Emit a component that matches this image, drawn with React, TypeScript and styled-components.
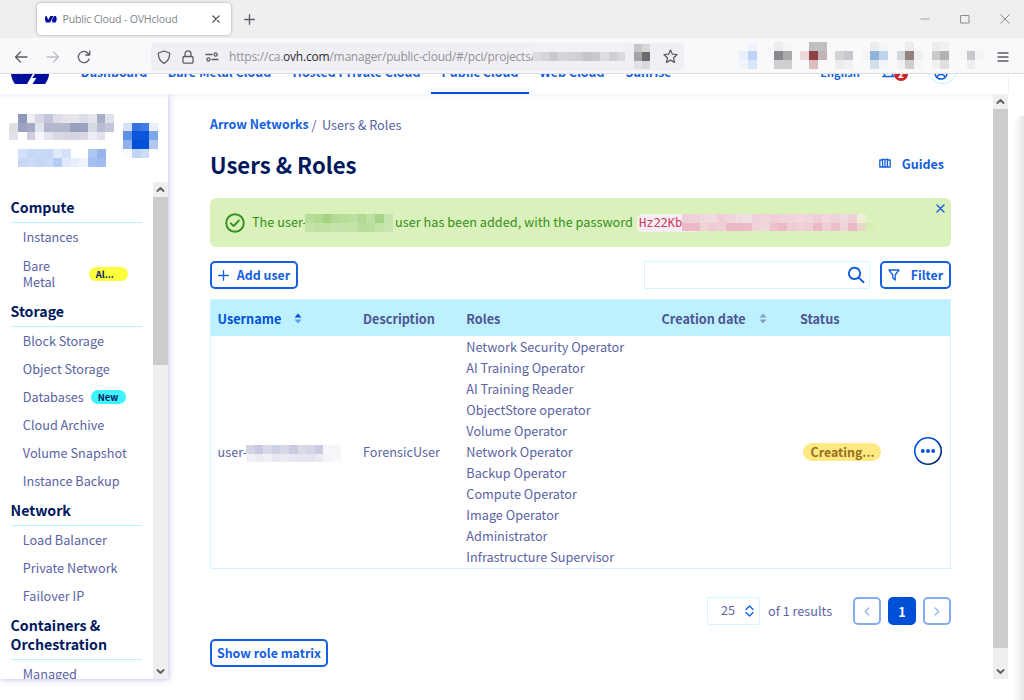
import React from "react";
import styled, { createGlobalStyle } from "styled-components";

const GlobalStyle = createGlobalStyle`
  *, *::before, *::after { box-sizing: border-box; }
  html, body { margin: 0; padding: 0; background: #fff; overflow: hidden; }
  svg { display: block; flex: none; }
`;

const ovhFont = `"Noto Sans CJK SC", "Open Sans", sans-serif`;
const systemFont = `"Open Sans", "Noto Sans", sans-serif`;
const blue = "#1460e0";
const navy = "#00185e";
const slate = "#5a63a3";

/* ---------- pixelated redaction ---------- */

const MosaicGrid = styled.div<{ $cols: number; $cell: number }>`
  display: grid;
  flex: none;
  grid-template-columns: repeat(${(p) => p.$cols}, ${(p) => p.$cell}px);
  grid-auto-rows: ${(p) => p.$cell}px;
`;

const Mosaic = ({ rows, cell = 8.75, className }: { rows: string[]; cell?: number; className?: string }) => {
  const cells = rows.map((r) => r.split(" "));
  return (
    <MosaicGrid $cols={cells[0].length} $cell={cell} className={className}>
      {cells.flatMap((row, y) =>
        row.map((c, x) => <span key={`${y}-${x}`} style={{ background: c === "-" ? "transparent" : `#${c}` }} />)
      )}
    </MosaicGrid>
  );
};

const toolbarPixels = [
  "- f0f3fb - - ededf0 f5f5f7 - - c0c0c2 c0c0c2 - - - - - ececee f4f5f7 - - ececee - - ececec f2f2f2 - - - -",
  "eaf0fb bfd3f7 - - 8a898d a9a9ab - ecd8da 8f4145 c4b5b5 - d3d3d5 c8c7cb - f4f4f7 90b3d8 bfd4ec - d3d8dc 94807c eeeeef - cacaca b2b2b4 - f6f6f7 c9c8cd f4f4f6",
  "f0f4fb d9e6f9 - - cfcfd1 cfcfd1 - - dcbcbe - - ececef f1f1f3 - - cfdfec f2f5fa - f0f0f2 cfcfcf f6f6f8 - f1f1f3 dfdfe1 - - eeeef1 -",
];
const urlPixels = [
  "f1f0f5 f2f1f6 f1f0f5 f2f1f6 f1f0f5 f1f0f5 f2f1f6 f1f0f5 f2f1f6 f1f0f5 f2f1f6 f0eff4 c8c7ca d8d7da",
  "dcdbdf d5d4d8 c9c8cc d5d4d8 d2d1d5 cfced2 c6c5c9 c8c7cb dedde1 cfced2 dad9dd f0eff4 a5a4a7 6b6a6d",
  "f0eff4 f0eff4 f0eff4 f0eff4 f0eff4 f0eff4 f0eff4 f0eff4 f0eff4 f0eff4 f0eff4 f0eff4 e3e2e6 d9d8dc",
];
const accountPixels = [
  "- 8e97b8 eeeff2 d6d7e3 c4c6d8 dcdde6 e3e4ec e5e6ec dddfe8 e3e4ec a8adc8 dfe1ea",
  "dedfe3 9ba3bf a3aac4 dfe4ee b2b6cf b4b8cf b4b8cf 9aa0bb 9da3be d5d9e4 b9bcd2 c3c6d6",
  "e2e2ec - cfcfde f4f6fa e4e4ee d8d9e5 d5d6e2 d5d6e3 d7d8e4 ecedf2 e2e2ec fdfdfe",
];
const accountLinkPixels = [
  "d2e0f8 c6d8f5 c9daf6 c6d8f5 dfe9fa d5e1f8 - - afc6f1 96b5ef",
  "c6d8f5 cbdaf5 c5d7f5 c9daf6 b4cdf4 e0e9fb e6edfb f1f4fb a5bff0 a0bcef",
];
const avatarPixels = [
  "d5e2f9 3273df 3f7ce3 e9effb",
  "5e91e6 0b56da 0b56da 7fa7ec",
  "8fb2ee 0250d7 0250d7 b0c7f2",
  "fafbfd c0d4f5 cdddf7 -",
];
const greenPixels = [
  "b9dd9b b1da90 a4d282 b4db96 b6dc99 bbdfa0 b0d892 bfe0a4 a6d488 c5e4ad",
  "c3e3a9 bfe1a4 bfe1a4 c5e4ac c3e3a9 c3e3a9 b9de9c b9de9c c3e3a9 c8e6b0",
];
const pinkPixels = [
  "efd0d6 efd2d9 f0d8dc f0dadd eecfd7 f0d5da f0dcdf f1e2e2 efd2d9 efd4da efced6 efd4da f0d6dc f0d8dc efd6db efcfd7 f0d8dc efd3da f0dade efd0d6 eef0d5 -",
  "ebb8c5 ecbac7 efd6d4 efc9d4 efcfd8 ebb8c5 ebb8c5 ecbdc9 efd2da f0d8da edc2cd ebb8c5 efccd5 efd0d8 efcdd6 ebb8c5 efced7 ecc0cb efd3da ebb8c5 e9d8c9 d5efb4",
];
const userPixels = [
  "d5d6e5 c6c8de d9dae8 cdcfe2 d6d8e7 c8cae0 d9dbe8 d5d6e6 c9cbe0 f6f6fa f6f6fa",
  "f0f0f6 ebebf3 f0f0f6 e8e8f2 ebebf4 e6e7f2 e5e6f2 e5e5f0 ebebf3 f6f6fa f9f9fc",
];

/* ---------- browser chrome ---------- */

const Window = styled.div`
  display: flex;
  flex-direction: column;
  width: 1024px;
  height: 700px;
  overflow: hidden;
  background: #fff;
  font-family: ${ovhFont};
  font-size: 12.7px;
  color: ${slate};
`;

const TabBar = styled.div`
  display: flex;
  align-items: center;
  height: 38px;
  flex: none;
  padding: 0 14px 0 37px;
  background: #efefef;
`;

const BrowserTab = styled.div`
  display: flex;
  align-items: center;
  width: 194px;
  height: 32px;
  padding: 0 9px 0 8px;
  border-radius: 4px;
  background: #fff;
  box-shadow: 0 0 3px rgba(0, 0, 0, 0.35);
`;

const TabTitle = styled.span`
  flex: 1;
  margin-left: 5.5px;
  font: 10.6px/16px ${systemFont};
  letter-spacing: -0.2px;
  color: #85858b;
  white-space: nowrap;
`;

const NewTab = styled.span`
  flex: 1;
  margin-left: 13px;
`;

const WindowButtons = styled.div`
  display: flex;
  align-items: center;
  gap: 30px;
`;

const AddressBar = styled.div`
  display: flex;
  align-items: center;
  flex: none;
  height: 36px;
  padding: 2px 15px 0 14px;
  background: #f9f9fb;
  border-bottom: 1px solid #dddde2;
`;

const HistoryButtons = styled.div`
  display: flex;
  align-items: center;
  gap: 17.5px;
  width: 137px;
`;

const UrlField = styled.div`
  display: flex;
  align-items: center;
  width: 533px;
  height: 28px;
  padding: 0 6px 0 6px;
  border-radius: 4px;
  background: #f0eff4;
`;

const UrlIcons = styled.div`
  display: flex;
  align-items: center;
  gap: 10px;
  width: 73px;
`;

const Url = styled.span`
  width: 304px;
  font: 12px/18px ${systemFont};
  letter-spacing: -0.22px;
  color: #929298;
  white-space: nowrap;
  b { font-weight: 400; color: #2a2a33; }
`;

const UrlMosaic = styled(Mosaic)`
  width: 118px;
  margin-right: 12px;
`;

const Extensions = styled(Mosaic)`
  margin: -2px auto 0 55px;
`;

/* ---------- site header ---------- */

const SiteHeader = styled.header`
  position: relative;
  z-index: 2;
  flex: none;
  width: 1009px;
  height: 20px;
  overflow: hidden;
  background: #fff;
  border-right: 1px solid #eef0fa;
`;

const HeaderInner = styled.div`
  display: flex;
  height: 47px;
  margin-top: -27px;
  padding-left: 11px;
`;

const HeaderLogo = styled.div`
  align-self: flex-end;
  width: 60px;
  height: 34px;
`;

const NavItem = styled.a<{ $width: number; $active?: boolean; $small?: boolean }>`
  width: ${(p) => p.$width}px;
  flex: none;
  padding-top: 15px;
  text-align: center;
  line-height: 20px;
  font-size: ${(p) => (p.$small ? 10.9 : 12.4)}px;
  font-weight: 700;
  color: ${blue};
  white-space: nowrap;
  box-shadow: ${(p) => (p.$active ? "inset 0 -2px 0 #0050d7" : "none")};
`;

const HeaderTools = styled.div`
  display: flex;
  flex: 1;
  padding-left: 128px;
`;

const Bell = styled.div`
  display: flex;
  margin: 17px 0 0 12px;
  width: 45px;
`;

const BellCount = styled.span`
  width: 14px;
  height: 14px;
  margin: 3px 0 0 -1px;
  border-radius: 50%;
  background: #c7252b;
  color: #fff;
  font-size: 10px;
  font-weight: 700;
  line-height: 14px;
  text-align: center;
`;

const UserCircle = styled.div`
  display: flex;
  justify-content: center;
  width: 31px;
  height: 31px;
  margin-top: 6px;
  padding: 12px 3px 0 0;
  border: 1px solid #bef1ff;
  border-radius: 50%;
`;

/* ---------- page frame ---------- */

const Page = styled.div`
  display: flex;
  flex: 1;
  min-height: 0;
  padding-bottom: 21px;
`;

const Sidebar = styled.aside`
  display: flex;
  flex-direction: column;
  flex: none;
  width: 168px;
  height: 585px;
  box-shadow: 0 0 6px rgba(100, 100, 210, 0.5), inset 0 5px 4px -3px #eef0fb;
`;

const Account = styled.div`
  display: flex;
  flex: none;
  height: 88px;
  padding: 20px 0 0 9px;
`;

const AccountText = styled.div`
  width: 114px;
`;

const AccountLink = styled(Mosaic)`
  margin: 9px 0 0 9px;
`;

const Avatar = styled(Mosaic)`
  margin-top: 8.5px;
`;

const SidebarScroll = styled.div`
  display: flex;
  flex: 1;
  min-height: 0;
`;

const Menu = styled.nav`
  flex: 1;
  padding: 10px 11px 0 10.5px;
  overflow: hidden;
`;

const MenuHeading = styled.h2`
  margin: 6px 0 0;
  padding-bottom: 5px;
  border-bottom: 1px solid #bef1ff;
  font-size: 14.2px;
  font-weight: 700;
  line-height: 19px;
  color: ${navy};
`;

const MenuItem = styled.a<{ $tall?: boolean }>`
  display: flex;
  align-items: center;
  height: ${(p) => (p.$tall ? 45 : 28)}px;
  padding-left: 12.3px;
  line-height: 16px;
  color: ${slate};
  white-space: nowrap;
`;

const MenuLabel = styled.span<{ $width?: number }>`
  width: ${(p) => (p.$width ? `${p.$width}px` : "auto")};
  white-space: ${(p) => (p.$width ? "normal" : "nowrap")};
`;

const Badge = styled.span<{ $color: string; $width: number; $gap: number }>`
  width: ${(p) => p.$width}px;
  height: 14px;
  margin-left: ${(p) => p.$gap}px;
  padding-left: 7px;
  border-radius: 7px;
  background: ${(p) => p.$color};
  font-size: 9.4px;
  font-weight: 700;
  line-height: 14px;
  color: ${navy};
`;

const Scrollbar = styled.div`
  display: flex;
  flex-direction: column;
  align-items: center;
  flex: none;
  width: 15px;
  background: #efefef;
`;

const ScrollArrow = styled.div`
  display: grid;
  place-items: center;
  width: 15px;
  height: 15px;
`;

const Thumb = styled.div<{ $height: number }>`
  width: 15px;
  height: ${(p) => p.$height}px;
  margin-bottom: auto;
  background: #cccccc;
`;

const Content = styled.main`
  display: flex;
  flex-direction: column;
  width: 825px;
  padding: 20px 42px 0 42px;
  box-shadow: inset 0 4px 4px -3px #e8ebf8;
`;

const WindowEdge = styled.div`
  width: 10px;
  margin: 22px 0 -21px auto;
  background: linear-gradient(to right, #fff, #e6e6ea);
  border-radius: 8px 0 0 0;
`;

/* ---------- content ---------- */

const Breadcrumb = styled.div`
  display: flex;
  height: 21px;
  line-height: 21px;
  white-space: nowrap;
`;

const BreadcrumbLink = styled.a`
  width: 101.5px;
  font-weight: 700;
  font-size: 12.4px;
  color: ${blue};
`;

const Crumb = styled.span`
  margin-left: 5.5px;
`;

const TitleRow = styled.div`
  display: flex;
  justify-content: space-between;
  align-items: center;
  height: 34px;
  margin-top: 12px;
  padding-right: 7px;
`;

const Title = styled.h1`
  margin: 0;
  font-size: 22.15px;
  line-height: 34px;
  font-weight: 700;
  color: ${navy};
`;

const Guides = styled.a`
  display: flex;
  align-items: center;
  gap: 11px;
  padding-bottom: 2px;
  font-size: 12.5px;
  font-weight: 700;
  color: ${blue};
`;

const Alert = styled.div`
  display: flex;
  align-items: center;
  height: 49px;
  margin-top: 17px;
  padding-left: 14.5px;
  border-radius: 6px;
  background: #dbf1bb;
  color: #33901a;
  line-height: 20px;
  white-space: nowrap;
`;

const AlertText = styled.span<{ $width: number; $left?: number }>`
  width: ${(p) => p.$width}px;
  margin-left: ${(p) => p.$left ?? 0}px;
  padding-bottom: 1px;
  letter-spacing: 0.02px;
`;

const AlertUser = styled(Mosaic)`
  margin-top: 1px;
`;

const Password = styled.code`
  display: flex;
  align-items: center;
  width: 237px;
  height: 18px;
  padding-left: 2px;
  border-radius: 5px 0 0 5px;
  font: 12.2px/18px "DejaVu Sans Mono", monospace;
  letter-spacing: -0.15px;
  color: #cf3a62;
  background: linear-gradient(to right, #f5eff2 60px, transparent 60px);
`;

const PasswordText = styled.span`
  width: 43px;
`;

const CloseButton = styled.div`
  align-self: flex-start;
  margin: 6px 6px 0 auto;
`;

const Toolbar = styled.div`
  display: flex;
  height: 28px;
  margin-top: 14px;
`;

const Button = styled.button<{ $width: number }>`
  display: flex;
  align-items: center;
  justify-content: center;
  gap: 8px;
  width: ${(p) => p.$width}px;
  height: 28px;
  padding: 0;
  border: 2px solid ${blue};
  border-radius: 5px;
  background: #fff;
  font: 700 12.4px/20px ${ovhFont};
  color: ${blue};
  white-space: nowrap;
`;

const SearchBox = styled.div`
  display: flex;
  align-items: center;
  justify-content: flex-end;
  width: 226px;
  height: 28px;
  margin: 0 10px 0 auto;
  padding-right: 4px;
  border: 1px solid #d3f6ff;
`;

const Table = styled.div`
  margin-top: 10px;
  border: 1px solid #d0f5ff;
`;

const Row = styled.div`
  display: grid;
  grid-template-columns: 145.5px 103.3px 195.2px 138.5px 114px 1fr;
  align-items: center;
  padding-left: 6.5px;
`;

const HeadRow = styled(Row)`
  height: 36px;
  background: #bef1ff;
  font-weight: 700;
`;

const BodyRow = styled(Row)`
  height: 232px;
  padding-bottom: 1px;
`;

const HeadCell = styled.div<{ $active?: boolean }>`
  display: flex;
  align-items: center;
  gap: 13px;
  color: ${(p) => (p.$active ? "#0050d7" : "#4d5592")};
`;

const UserCell = styled.div`
  display: flex;
  align-items: center;
`;

const UserPrefix = styled.span`
  width: 28.5px;
`;

const UserMosaic = styled(Mosaic)`
  margin-top: 4px;
`;

const RoleLine = styled.div`
  line-height: 21px;
  white-space: nowrap;
`;

const Status = styled.span`
  width: 78px;
  height: 18px;
  margin-left: 3.5px;
  border-radius: 9px;
  background: #ffe982;
  font-size: 12.4px;
  font-weight: 700;
  line-height: 18px;
  text-align: center;
  color: #96701f;
`;

const RowMenu = styled.div`
  padding-bottom: 1px;
`;

const Pagination = styled.div`
  display: flex;
  align-items: center;
  justify-content: flex-end;
  gap: 7px;
  height: 28px;
  margin-top: 28px;
`;

const PageSize = styled.div`
  display: flex;
  justify-content: space-between;
  align-items: center;
  width: 53px;
  height: 28px;
  padding: 0 5px 0 13px;
  border: 1px solid #d3f6ff;
  border-radius: 2px;
`;

const PageSizeValue = styled.span`
  padding-bottom: 3px;
`;

const Results = styled.span`
  width: 71px;
  margin: 0 7px 0 1px;
  padding-bottom: 1px;
  white-space: nowrap;
`;

const PageButton = styled.div<{ $current?: boolean }>`
  display: grid;
  place-items: center;
  width: 28px;
  height: 28px;
  border: 2px solid ${(p) => (p.$current ? "#0050d7" : "#85abf0")};
  border-radius: 5px;
  background: ${(p) => (p.$current ? "#0050d7" : "#fff")};
  color: #fff;
  font-weight: 700;
`;

const Footer = styled.div`
  margin-top: 14px;
`;

/* ---------- icons ---------- */

const Stroke = ({ w, h = w, d, color = "#5b5b66", sw = 1.3 }: { w: number; h?: number; d: string; color?: string; sw?: number }) => (
  <svg width={w} height={h} viewBox={`0 0 ${w} ${h}`} fill="none" stroke={color} strokeWidth={sw} strokeLinecap="round" strokeLinejoin="round">
    <path d={d} />
  </svg>
);

const OvhMark = ({ width, height }: { width: number; height: number }) => (
  <svg width={width} height={height} viewBox="0 0 40 24" fill="#000e9c">
    <path d="M2 2C-1 8 -1 18 4 24H16.5L29 2H18L11 14.5L5 2Z" />
    <path d="M27 9L31 2H36C41 10 39.5 18 35 24H22L26 18H22Z" />
  </svg>
);

const SortIcon = ({ up, down }: { up: string; down: string }) => (
  <svg width="8" height="11" viewBox="0 0 8 11">
    <path d="M0.5 4.5L4 0.5L7.5 4.5Z" fill={up} />
    <path d="M0.5 6.5L4 10.5L7.5 6.5Z" fill={down} />
  </svg>
);

const MoreIcon = () => (
  <svg width="28" height="28" viewBox="0 0 28 28">
    <defs>
      <linearGradient id="ring" x1="0" y1="0" x2="1" y2="1">
        <stop offset="0.3" stopColor="#0050d7" />
        <stop offset="0.8" stopColor="#002d7a" />
      </linearGradient>
    </defs>
    <circle cx="14" cy="14" r="13.2" fill="#fff" stroke="url(#ring)" strokeWidth="1.6" />
    <g fill="#0050d7">
      <circle cx="8.8" cy="14" r="1.9" />
      <circle cx="14" cy="14" r="1.9" />
      <circle cx="19.2" cy="14" r="1.9" />
    </g>
  </svg>
);

const VerticalScroll = ({ thumb }: { thumb: number }) => (
  <Scrollbar>
    <ScrollArrow><Stroke w={9} h={7} d="M1.4 5L4.5 2L7.6 5" color="#606060" sw={1.8} /></ScrollArrow>
    <Thumb $height={thumb} />
    <ScrollArrow><Stroke w={9} h={7} d="M1.4 2L4.5 5L7.6 2" color="#606060" sw={1.8} /></ScrollArrow>
  </Scrollbar>
);

/* ---------- data ---------- */

const roles = [
  "Network Security Operator",
  "AI Training Operator",
  "AI Training Reader",
  "ObjectStore operator",
  "Volume Operator",
  "Network Operator",
  "Backup Operator",
  "Compute Operator",
  "Image Operator",
  "Administrator",
  "Infrastructure Supervisor",
];

const navItems: [string, number][] = [
  ["Dashboard", 86],
  ["Bare Metal Cloud", 125],
  ["Hosted Private Cloud", 149],
  ["Public Cloud", 98],
  ["Web Cloud", 86],
  ["Sunrise", 67],
];

export default function App() {
  return (
    <Window>
      <GlobalStyle />
      <TabBar>
        <BrowserTab>
          <OvhMark width={12} height={8} />
          <TabTitle>Public Cloud - OVHcloud</TabTitle>
          <Stroke w={12} d="M2.8 2.8L9.2 9.2M9.2 2.8L2.8 9.2" color="#45454d" sw={1.2} />
        </BrowserTab>
        <NewTab><Stroke w={11} d="M5.5 0.7V10.3M0.7 5.5H10.3" /></NewTab>
        <WindowButtons>
          <Stroke w={10} d="M0.8 5H9.2" color="#a0a0a0" sw={1} />
          <Stroke w={10} d="M1 1.5H9V9H1Z" color="#8a8a8a" sw={1} />
          <Stroke w={10} d="M0.8 0.8L9.2 9.2M9.2 0.8L0.8 9.2" color="#8a8a8a" sw={1} />
        </WindowButtons>
      </TabBar>
      <AddressBar>
        <HistoryButtons>
          <Stroke w={14} d="M13 7H1.5M6.5 2L1.5 7L6.5 12" />
          <Stroke w={14} d="M1 7H12.5M7.5 2L12.5 7L7.5 12" color="#bdbdc3" />
          <Stroke w={14} d="M12.2 9A5.6 5.6 0 1 1 11 3.2L12.6 4.8M12.7 1V5H8.7" />
        </HistoryButtons>
        <UrlField>
          <UrlIcons>
            <Stroke w={14} d="M7 1L12.6 3C12.8 8 11 11.4 7 13.3C3 11.4 1.2 8 1.4 3Z" />
            <Stroke w={14} d="M3.2 6.5H10.8Q12 6.5 12 7.7V12Q12 13.2 10.8 13.2H3.2Q2 13.2 2 12V7.7Q2 6.5 3.2 6.5ZM4 6.3V3.8C4 0 10 0 10 3.8V6.3" />
            <Stroke w={14} d="M1 4.5H7M7 9.5H13M9 4.5a1.6 1.6 0 1 0 3.2 0a1.6 1.6 0 1 0 -3.2 0M1.8 9.5a1.6 1.6 0 1 0 3.2 0a1.6 1.6 0 1 0 -3.2 0" />
          </UrlIcons>
          <Url>https://ca.<b>ovh.com</b>/manager/public-cloud/#/pci/projects/</Url>
          <UrlMosaic rows={urlPixels} cell={8.4} />
          <Stroke w={15} d="M7.5 1L9.4 5.2L14 5.7L10.6 8.8L11.5 13.4L7.5 11.1L3.5 13.4L4.4 8.8L1 5.7L5.6 5.2Z" />
        </UrlField>
        <Extensions rows={toolbarPixels} cell={8.76} />
        <Stroke w={12} d="M1 2H11M1 6H11M1 10H11" />
      </AddressBar>
      <SiteHeader>
        <HeaderInner>
          <HeaderLogo>
            <OvhMark width={39} height={24.5} />
          </HeaderLogo>
          {navItems.map(([label, width]) => (
            <NavItem key={label} $width={width} $active={label === "Public Cloud"}>{label}</NavItem>
          ))}
          <HeaderTools>
            <NavItem $width={60} $small>English</NavItem>
            <Bell>
              <Stroke w={13} h={14} d="M1 12.5H12M2.5 12V6C2.5 0.5 10.5 0.5 10.5 6V12" color={blue} sw={1.7} />
              <BellCount>2</BellCount>
            </Bell>
            <UserCircle>
              <Stroke w={14} d="M7 1a6 6 0 1 0 .01 0M7 3.5a2.4 2.4 0 1 0 .01 0M3 11.2C4 7.6 10 7.6 11 11.2" color={blue} sw={1.5} />
            </UserCircle>
          </HeaderTools>
        </HeaderInner>
      </SiteHeader>
      <Page>
        <Sidebar>
          <Account>
            <AccountText>
              <Mosaic rows={accountPixels} />
              <AccountLink rows={accountLinkPixels} />
            </AccountText>
            <Avatar rows={avatarPixels} />
          </Account>
          <SidebarScroll>
            <Menu>
              <MenuHeading>Compute</MenuHeading>
              <MenuItem>Instances</MenuItem>
              <MenuItem $tall>
                <MenuLabel $width={40}>Bare Metal</MenuLabel>
                <Badge $color="#fbff3c" $width={39} $gap={26}>Al...</Badge>
              </MenuItem>
              <MenuHeading>Storage</MenuHeading>
              <MenuItem>Block Storage</MenuItem>
              <MenuItem>Object Storage</MenuItem>
              <MenuItem>
                <MenuLabel>Databases</MenuLabel>
                <Badge $color="#3ef5ff" $width={35} $gap={7}>New</Badge>
              </MenuItem>
              <MenuItem>Cloud Archive</MenuItem>
              <MenuItem>Volume Snapshot</MenuItem>
              <MenuItem>Instance Backup</MenuItem>
              <MenuHeading>Network</MenuHeading>
              <MenuItem>Load Balancer</MenuItem>
              <MenuItem>Private Network</MenuItem>
              <MenuItem>Failover IP</MenuItem>
              <MenuHeading>Containers &amp; Orchestration</MenuHeading>
              <MenuItem>Managed</MenuItem>
            </Menu>
            <VerticalScroll thumb={168} />
          </SidebarScroll>
        </Sidebar>
        <Content>
          <Breadcrumb>
            <BreadcrumbLink>Arrow Networks</BreadcrumbLink>/<Crumb>Users &amp; Roles</Crumb>
          </Breadcrumb>
          <TitleRow>
            <Title>Users &amp; Roles</Title>
            <Guides>
              <Stroke w={12} h={10} d="M0.8 2V9H11.2V2M3.6 1.2V8.5M6 2V9M8.4 1.2V8.5M3.6 1.2H4.8L6 2L7.2 1.2H8.4M0.8 2H3M9 2H11.2" color={blue} sw={1.3} />
              Guides
            </Guides>
          </TitleRow>
          <Alert>
            <svg width="20" height="20" viewBox="0 0 20 20" fill="none" stroke="#33901a" strokeWidth="1.9" strokeLinecap="round" strokeLinejoin="round">
              <circle cx="10" cy="10" r="8.8" />
              <path d="M5.8 10.4L8.7 13L14 7.4" />
            </svg>
            <AlertText $width={53} $left={7.5}>The user-</AlertText>
            <AlertUser rows={greenPixels} />
            <AlertText $width={242} $left={2.5}>user has been added, with the password</AlertText>
            <Password>
              <PasswordText>Hz22Kb</PasswordText>
              <Mosaic rows={pinkPixels} />
            </Password>
            <CloseButton><Stroke w={9} d="M1 1L8 8M8 1L1 8" color={blue} sw={1.4} /></CloseButton>
          </Alert>
          <Toolbar>
            <Button $width={88}>
              <Stroke w={11} d="M5.5 0.7V10.3M0.7 5.5H10.3" color={blue} sw={1.3} />
              Add user
            </Button>
            <SearchBox>
              <Stroke w={18} d="M7.5 1.8a5.6 5.6 0 1 0 .01 0M11.6 11.6L16.5 16.2" color={blue} sw={1.9} />
            </SearchBox>
            <Button $width={71}>
              <Stroke w={12} d="M1 1H11L7.2 6V11L4.8 9V6Z" color={blue} sw={1.3} />
              &nbsp;Filter
            </Button>
          </Toolbar>
          <Table>
            <HeadRow>
              <HeadCell $active>Username<SortIcon up="#0050d7" down="#5f9aea" /></HeadCell>
              <HeadCell>Description</HeadCell>
              <HeadCell>Roles</HeadCell>
              <HeadCell>Creation date<SortIcon up="#7f9fce" down="#7f9fce" /></HeadCell>
              <HeadCell>Status</HeadCell>
            </HeadRow>
            <BodyRow>
              <UserCell><UserPrefix>user-</UserPrefix><UserMosaic rows={userPixels} cell={8.6} /></UserCell>
              <div>ForensicUser</div>
              <div>{roles.map((r) => <RoleLine key={r}>{r}</RoleLine>)}</div>
              <div />
              <Status>Creating...</Status>
              <RowMenu><MoreIcon /></RowMenu>
            </BodyRow>
          </Table>
          <Pagination>
            <PageSize>
              <PageSizeValue>25</PageSizeValue>
              <Stroke w={9} h={12} d="M1 4.5L4.5 1L8 4.5M1 7.5L4.5 11L8 7.5" color={blue} sw={1.4} />
            </PageSize>
            <Results>of 1 results</Results>
            <PageButton><Stroke w={6} h={9} d="M5 0.8L1.2 4.5L5 8.2" color="#85abf0" sw={1.1} /></PageButton>
            <PageButton $current>1</PageButton>
            <PageButton><Stroke w={6} h={9} d="M1 0.8L4.8 4.5L1 8.2" color="#85abf0" sw={1.1} /></PageButton>
          </Pagination>
          <Footer>
            <Button $width={118}>Show role matrix</Button>
          </Footer>
        </Content>
        <VerticalScroll thumb={539} />
        <WindowEdge />
      </Page>
    </Window>
  );
}
